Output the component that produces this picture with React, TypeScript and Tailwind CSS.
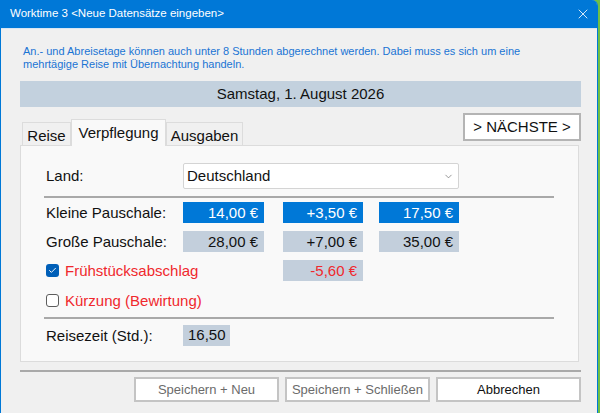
import { ChevronDown, Check, X } from 'lucide-react'

const FONT = "font-['Liberation_Sans',Arial,sans-serif]"

function Amount({ value, tone = 'gray', className = '' }: {
  value: string
  tone?: 'blue' | 'gray' | 'red'
  className?: string
}) {
  const toneClass = tone === 'blue'
    ? 'bg-[#0078d7] text-white'
    : tone === 'red'
      ? 'bg-[#c3cfdc] text-[#f0282d]'
      : 'bg-[#c3cfdc] text-[#111]'
  return (
    <div className={`h-[21px] flex items-center justify-end pr-[6px] text-[15px] leading-none ${toneClass} ${className}`}>
      {value}
    </div>
  )
}

function CheckBox({ checked }: { checked: boolean }) {
  return checked
    ? <span className="w-[13px] h-[13px] rounded-[3px] bg-[#005fb8] flex items-center justify-center">
        <Check className="w-[9px] h-[9px] text-white" strokeWidth={2.5} />
      </span>
    : <span className="w-[13px] h-[13px] rounded-[3px] border border-[#5d5d5d] bg-white" />
}

function Tab({ label, active, className = '' }: { label: string; active?: boolean; className?: string }) {
  return active
    ? <div className={`h-[27px] pt-[2px] -mb-px text-center bg-[#f9f9f9] border border-b-0 border-[#dcdcdc] text-[15px] text-[#111] relative z-10 ${className}`}>
        {label}
      </div>
    : <div className={`h-[23px] pt-[2px] text-center bg-[#f0f0f0] border border-b-0 border-[#dcdcdc] text-[15px] text-[#111] ${className}`}>
        {label}
      </div>
}

function DialogButton({ label, disabled }: { label: string; disabled?: boolean }) {
  return (
    <button className={`w-[145px] h-[25px] bg-white border-2 border-[#c4c4c4] text-[13px] ${disabled ? 'text-[#6b6b6b]' : 'text-[#111]'}`}>
      {label}
    </button>
  )
}

function Row({ label, children, className = '' }: { label: string; children?: React.ReactNode; className?: string }) {
  return (
    <div className={`h-[21px] flex items-center ${className}`}>
      <span className="w-[139px] pl-[2px] text-[15px] leading-[21px] text-[#111]">{label}</span>
      {children}
    </div>
  )
}

export default function App() {
  return (
    <div className={`w-[600px] h-[413px] bg-[#6fbf45] overflow-hidden ${FONT}`}>
      <div className="w-[598px] h-full bg-[#f0f0f0] border-x border-[#0078d7] rounded-tr-[6px] flex flex-col">
        {/* title bar */}
        <div className="h-[28px] bg-[#0078d7] rounded-tr-[5px] flex items-center pl-[9px] pr-[6px] text-white text-[11.5px]">
          <span className="flex-1">Worktime 3 &lt;Neue Datensätze eingeben&gt;</span>
          <X className="w-[16px] h-[16px]" strokeWidth={1.25} />
        </div>
        <div className="h-px bg-[#d8e6f3]" />

        <div className="pl-[19px] pr-[16px] flex flex-col">
          <p className="mt-[16px] pl-[3px] text-[11px] leading-[13px] text-[#1a74d4]">
            An.- und Abreisetage können auch unter 8 Stunden abgerechnet werden. Dabei muss es sich um eine<br />
            mehrtägige Reise mit Übernachtung handeln.
          </p>

          <div className="mt-[10px] h-[26px] bg-[#c3d1de] flex items-center justify-center text-[15px] text-[#111]">
            Samstag, 1. August 2026
          </div>

          {/* tabs + next */}
          <div className="mt-[6px] h-[32px] flex items-end justify-between">
            <div className="flex items-end pl-[2px]">
              <Tab label="Reise" className="w-[49px]" />
              <Tab label="Verpflegung" active className="w-[95px]" />
              <Tab label="Ausgaben" className="w-[77px]" />
            </div>
            <button className="mb-[4px] w-[118px] h-[28px] bg-white border-2 border-[#b4b4b4] text-[15px] text-[#111]">
              &gt; NÄCHSTE &gt;
            </button>
          </div>

          {/* panel */}
          <div className="w-[559px] h-[217px] bg-[#f9f9f9] border border-[#dcdcdc] pl-[23px] pr-[23px]">
            <div className="mt-[17px] h-[26px] flex items-center">
              <span className="w-[139px] pl-[2px] text-[15px] text-[#111]">Land:</span>
              <div className="w-[276px] h-[26px] bg-white border border-[#d4d4d4] rounded-[2px] flex items-center pl-[3px] pr-[4px] text-[15px] text-[#111]">
                <span className="flex-1">Deutschland</span>
                <ChevronDown className="w-[11px] h-[11px] text-[#6a6a6a]" strokeWidth={1.5} />
              </div>
            </div>
            <div className="mt-[7px] h-[2px] w-[510px] bg-[#a9a9a9]" />

            <Row label="Kleine Pauschale:" className="mt-[4px]">
              <Amount value="14,00 €" tone="blue" className="w-[81px]" />
              <Amount value="+3,50 €" tone="blue" className="w-[80px] ml-[19px]" />
              <Amount value="17,50 €" tone="blue" className="w-[80px] ml-[16px]" />
            </Row>
            <Row label="Große Pauschale:" className="mt-[8px]">
              <Amount value="28,00 €" className="w-[81px]" />
              <Amount value="+7,00 €" className="w-[80px] ml-[19px]" />
              <Amount value="35,00 €" className="w-[80px] ml-[16px]" />
            </Row>
            <div className="mt-[8px] h-[21px] flex items-center">
              <span className="w-[239px] pl-[2px] flex items-center gap-[6px] text-[15px] leading-[21px] text-[#f0282d]">
                <CheckBox checked />
                Frühstücksabschlag
              </span>
              <Amount value="-5,60 €" tone="red" className="w-[80px]" />
            </div>
            <div className="mt-[9px] h-[21px] pl-[2px] flex items-center gap-[6px] text-[15px] leading-[21px] text-[#f0282d]">
              <CheckBox checked={false} />
              Kürzung (Bewirtung)
            </div>
            <div className="mt-[6px] h-[2px] w-[510px] bg-[#a9a9a9]" />

            <Row label="Reisezeit (Std.):" className="mt-[6px]">
              <div className="w-[47px] h-[21px] bg-[#c3cfdc] flex items-center pl-[5px] text-[15px] text-[#111]">16,50</div>
            </Row>
          </div>

          <div className="mt-[8px] h-[2px] bg-[#a9a9a9]" />

          <div className="mt-[5px] flex justify-end gap-[6px]">
            <DialogButton label="Speichern + Neu" disabled />
            <DialogButton label="Speichern + Schließen" disabled />
            <DialogButton label="Abbrechen" />
          </div>
        </div>
      </div>
    </div>
  )
}
